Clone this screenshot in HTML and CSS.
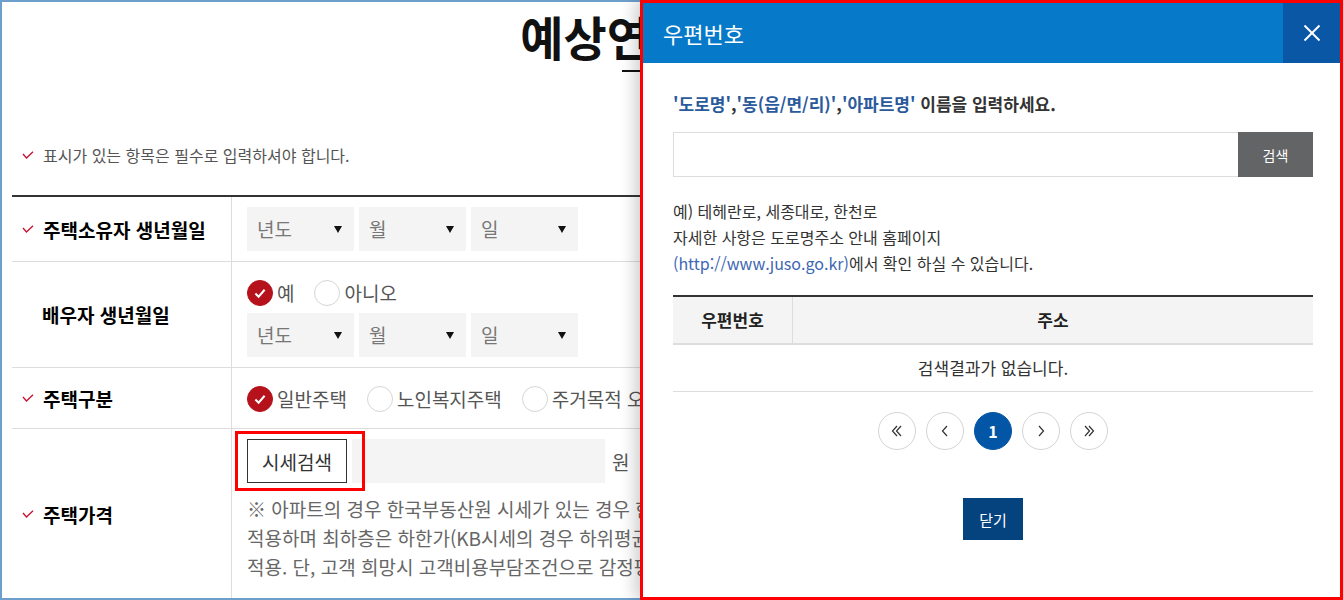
FILE: index.html
```html
<!DOCTYPE html>
<html lang="ko">
<head>
  <meta charset="UTF-8" />
  <meta name="viewport" content="width=device-width, initial-scale=1.0" />
  <title>예상연금조회 - 우편번호</title>
  <link rel="stylesheet" href="styles.css">
</head>
<body>
  <div class="screen">
    <div class="page">
      <div class="wrap">
        <h1 class="title">예상연금조회</h1>
        <div class="title-bar"></div>

        <p class="notice">
          <svg class="req" width="12" height="8" viewBox="0 0 12 8"><polyline points="1,3 4.5,7 11,0.8" /></svg>
          표시가 있는 항목은 필수로 입력하셔야 합니다.
        </p>

        <div class="form-table">
          <div class="row">
            <div class="row-label">
              <svg class="req" width="12" height="8" viewBox="0 0 12 8"><polyline points="1,3 4.5,7 11,0.8" /></svg>
              주택소유자 생년월일
            </div>
            <div class="row-field">
              <div class="selects">
                <div class="select">년도</div>
                <div class="select">월</div>
                <div class="select">일</div>
              </div>
            </div>
          </div>

          <div class="row">
            <div class="row-label no-req">배우자 생년월일</div>
            <div class="row-field">
              <div class="radios">
                <label class="radio checked"><span class="dot"><svg viewBox="0 0 26 26"><polyline points="8,13.5 11.5,17 18,9.5" /></svg></span>예</label>
                <label class="radio"><span class="dot"></span>아니오</label>
              </div>
              <div class="selects">
                <div class="select">년도</div>
                <div class="select">월</div>
                <div class="select">일</div>
              </div>
            </div>
          </div>

          <div class="row row-type">
            <div class="row-label">
              <svg class="req" width="12" height="8" viewBox="0 0 12 8"><polyline points="1,3 4.5,7 11,0.8" /></svg>
              주택구분
            </div>
            <div class="row-field">
              <div class="radios">
                <label class="radio checked"><span class="dot"><svg viewBox="0 0 26 26"><polyline points="8,13.5 11.5,17 18,9.5" /></svg></span>일반주택</label>
                <label class="radio"><span class="dot"></span>노인복지주택</label>
                <label class="radio"><span class="dot"></span>주거목적 오피스텔</label>
              </div>
            </div>
          </div>

          <div class="row row-price">
            <div class="row-label">
              <svg class="req" width="12" height="8" viewBox="0 0 12 8"><polyline points="1,3 4.5,7 11,0.8" /></svg>
              주택가격
            </div>
            <div class="row-field">
              <div class="price-line">
                <span class="btn-wrap">
                  <button type="button" class="btn-line">시세검색</button>
                  <span class="mark"></span>
                </span>
                <div class="price-input"></div>
                <span class="unit">원</span>
              </div>
              <p class="price-note">
                ※ 아파트의 경우 한국부동산원 시세가 있는 경우 한국부동산원 시세, 없는 경우 KB시세(일반평균가)를<br>
                적용하며 최하층은 하한가(KB시세의 경우 하위평균가), 그 외 주택은 공시가격을<br>
                적용. 단, 고객 희망시 고객비용부담조건으로 감정평가금액 적용 가능
              </p>
            </div>
          </div>
        </div>
      </div>
    </div>

    <div class="modal">
      <div class="modal-head">
        <h2>우편번호</h2>
        <button type="button" class="modal-close">
          <svg width="18" height="18" viewBox="0 0 18 18"><line x1="1.5" y1="1.5" x2="16.5" y2="16.5" /><line x1="16.5" y1="1.5" x2="1.5" y2="16.5" /></svg>
        </button>
      </div>
      <div class="modal-body">
        <p class="guide"><em>'도로명'</em>,<em>'동(읍/면/리)'</em>,<em>'아파트명'</em> 이름을 입력하세요.</p>

        <div class="search">
          <div class="search-input"></div>
          <button type="button" class="search-btn">검색</button>
        </div>

        <p class="example">
          예) 테헤란로, 세종대로, 한천로<br>
          자세한 사항은 도로명주소 안내 홈페이지<br>
          <a href="#">(http://www.juso.go.kr)</a>에서 확인 하실 수 있습니다.
        </p>

        <div class="result-head">
          <div class="col-zip">우편번호</div>
          <div class="col-addr">주소</div>
        </div>
        <div class="result-empty">검색결과가 없습니다.</div>

        <div class="paging">
          <a href="#" class="pg"><svg width="12" height="12" viewBox="0 0 12 12"><polyline points="6,1 1.5,6 6,11" /><polyline points="10,1 5.5,6 10,11" /></svg></a>
          <a href="#" class="pg"><svg width="12" height="12" viewBox="0 0 12 12"><polyline points="8,1 3.5,6 8,11" /></svg></a>
          <a href="#" class="pg on">1</a>
          <a href="#" class="pg"><svg width="12" height="12" viewBox="0 0 12 12"><polyline points="4,1 8.5,6 4,11" /></svg></a>
          <a href="#" class="pg"><svg width="12" height="12" viewBox="0 0 12 12"><polyline points="2,1 6.5,6 2,11" /><polyline points="6,1 10.5,6 6,11" /></svg></a>
        </div>

        <div class="modal-foot">
          <button type="button" class="btn-close">닫기</button>
        </div>
      </div>
    </div>
  </div>
</body>
</html>
```

FILE: styles.css
```css
* {
  box-sizing: border-box;
}
body {
  margin: 0;
  font-family: "Noto Sans CJK KR", "Noto Sans", sans-serif;
  color: #333;
  background: #fff;
}
p, h1, h2 {
  margin: 0;
}
button {
  font-family: inherit;
  cursor: pointer;
}

.screen {
  display: flex;
  width: 1343px;
  height: 600px;
  overflow: hidden;
}

/* left page */
.page {
  width: 640px;
  height: 600px;
  flex-shrink: 0;
  overflow: hidden;
  border: 2px solid #6c9fcb;
  border-right: none;
}
.wrap {
  width: 1260px;
  margin-left: 10px;
}
.title {
  margin-top: 8px;
  padding-left: 16px;
  text-align: center;
  font-size: 47px;
  line-height: 52px;
  font-weight: 700;
  letter-spacing: 0;
  color: #111;
}
.title-bar {
  width: 40px;
  height: 2px;
  margin: 8px auto 0;
  background: #111;
}
.notice {
  margin-top: 72px;
  padding-left: 10px;
  font-size: 16px;
  line-height: 22px;
  color: #555;
  display: flex;
  align-items: center;
  gap: 9px;
}
.req polyline {
  fill: none;
  stroke: #c8102e;
  stroke-width: 1.3;
}

.form-table {
  margin-top: 29px;
  border-top: 2px solid #333;
}
.row {
  display: grid;
  grid-template-columns: 220px 1fr;
  border-bottom: 1px solid #ddd;
}
.row-label {
  display: flex;
  align-items: center;
  gap: 9px;
  padding-left: 10px;
  border-right: 1px solid #ddd;
  font-size: 19px;
  font-weight: 700;
  color: #000;
}
.row-label.no-req {
  padding-left: 30px;
}
.row-field {
  padding: 10px 15px;
}
.row-type .row-field {
  padding-bottom: 9px;
}
.selects {
  display: flex;
  gap: 5px;
}
.select {
  position: relative;
  width: 107px;
  height: 44px;
  padding-left: 10px;
  background: #f4f4f4;
  font-size: 19px;
  line-height: 44px;
  color: #777;
}
.select::after {
  content: "";
  position: absolute;
  right: 12px;
  top: 19px;
  border-left: 4px solid transparent;
  border-right: 4px solid transparent;
  border-top: 7px solid #111;
}
.radios {
  display: flex;
  align-items: center;
  height: 41px;
}
.radio {
  display: flex;
  align-items: center;
  gap: 4px;
  margin-right: 20px;
  font-size: 19px;
  color: #555;
}
.dot {
  width: 26px;
  height: 26px;
  border-radius: 50%;
  border: 1px solid #d6d6d6;
  background: #fff;
}
.radio.checked .dot {
  border-color: #b5121b;
  background: #b5121b;
}
.dot svg {
  display: block;
  width: 24px;
  height: 24px;
}
.dot polyline {
  fill: none;
  stroke: #fff;
  stroke-width: 2.2;
}

.row-price .row-field {
  padding-bottom: 18px;
}
.price-line {
  display: flex;
  align-items: center;
  gap: 5px;
}
.btn-wrap {
  position: relative;
  display: block;
}
.btn-line {
  display: block;
  width: 100px;
  height: 44px;
  border: 1px solid #333;
  background: #fff;
  font-size: 19px;
  color: #333;
}
.mark {
  position: absolute;
  left: -12px;
  top: -8px;
  right: -18px;
  bottom: -8px;
  border: 3px solid #f00;
}
.price-input {
  width: 253px;
  height: 44px;
  background: #f4f4f4;
}
.unit {
  margin-left: 2px;
  font-size: 19px;
  color: #555;
}
.price-note {
  margin-top: 11px;
  font-size: 19px;
  line-height: 29px;
  color: #666;
  white-space: nowrap;
}

/* modal */
.modal {
  position: relative;
  width: 703px;
  height: 600px;
  flex-shrink: 0;
  border: 3px solid #f00;
  background: #fff;
  box-shadow: -6px 0 14px rgba(0, 0, 0, 0.18);
}
.modal-head {
  display: flex;
  align-items: center;
  justify-content: space-between;
  height: 60px;
  padding-left: 20px;
  background: #0679c9;
}
.modal-head h2 {
  font-size: 22px;
  font-weight: 400;
  color: #fff;
}
.modal-close {
  width: 57px;
  height: 60px;
  border: none;
  background: #0957a5;
  display: flex;
  align-items: center;
  justify-content: center;
}
.modal-close line {
  stroke: #fff;
  stroke-width: 2;
}
.modal-body {
  padding: 30px 27px 0 30px;
}
.guide {
  font-size: 17px;
  line-height: 22px;
  font-weight: 700;
  color: #333;
}
.guide em {
  font-style: normal;
  color: #2b5a9c;
}
.search {
  display: flex;
  margin-top: 17px;
  height: 45px;
}
.search-input {
  flex: 1;
  border: 1px solid #ddd;
  border-right: none;
}
.search-btn {
  width: 75px;
  border: none;
  background: #636466;
  color: #fff;
  font-size: 14px;
}
.example {
  margin-top: 21px;
  font-size: 16px;
  line-height: 26px;
  color: #333;
}
.example a {
  color: #3d66b3;
  text-decoration: none;
}
.result-head {
  display: grid;
  grid-template-columns: 120px 1fr;
  margin-top: 19px;
  border-top: 2px solid #333;
  border-bottom: 2px solid #ddd;
  background: #f4f4f4;
  font-size: 17px;
  font-weight: 700;
  color: #222;
  text-align: center;
}
.result-head div {
  height: 46px;
  line-height: 46px;
}
.col-zip {
  border-right: 1px solid #ddd;
}
.result-empty {
  height: 47px;
  line-height: 46px;
  border-bottom: 1px solid #ddd;
  text-align: center;
  font-size: 17px;
  color: #333;
}
.paging {
  display: flex;
  justify-content: center;
  gap: 10px;
  margin-top: 20px;
}
.pg {
  width: 38px;
  height: 38px;
  border: 1px solid #d4d4d4;
  border-radius: 50%;
  display: flex;
  align-items: center;
  justify-content: center;
  text-decoration: none;
}
.pg polyline {
  fill: none;
  stroke: #333;
  stroke-width: 1.2;
}
.pg.on {
  border-color: #0356a6;
  background: #0356a6;
  color: #fff;
  font-size: 16px;
  font-weight: 700;
}
.modal-foot {
  display: flex;
  justify-content: center;
  margin-top: 48px;
}
.btn-close {
  width: 60px;
  height: 42px;
  border: none;
  background: #05437f;
  color: #fff;
  font-size: 15px;
}
```
